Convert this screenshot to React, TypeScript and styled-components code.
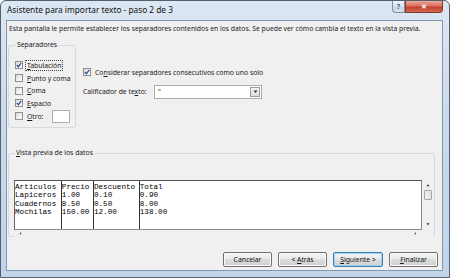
import styled, { createGlobalStyle } from "styled-components";

const GlobalStyle = createGlobalStyle`
  html, body {
    margin: 0;
    padding: 0;
    background: #ffffff;
  }
  body {
    font-family: "Noto Sans", "Open Sans", sans-serif;
    color: #1a1a1a;
  }
`;

const Window = styled.div`
  width: 450px;
  height: 278px;
  box-sizing: border-box;
  border: 1px solid #56606c;
  border-radius: 6px 6px 0 0;
  background: linear-gradient(180deg, #dce7f3 0%, #cbdaec 40%, #c1d4ea 100%);
  padding: 0 6px 6px 5px;
  display: flex;
  flex-direction: column;
`;

const TitleBar = styled.div`
  height: 19px;
  display: flex;
  justify-content: space-between;
  align-items: flex-start;
  flex-shrink: 0;
`;

const Title = styled.div`
  font-size: 8.3px;
  line-height: 10px;
  padding: 4px 0 0 1px;
  color: #111;
`;

const Controls = styled.div`
  display: flex;
`;

const CaptionButton = styled.div<{ kind: "help" | "close" }>`
  height: 12px;
  width: ${(p) => (p.kind === "close" ? "38px" : "13px")};
  box-sizing: border-box;
  border: 1px solid ${(p) => (p.kind === "close" ? "#7a3a30" : "#7f8ea3")};
  border-top: none;
  border-radius: ${(p) => (p.kind === "close" ? "0 0 4px 0" : "0 0 0 4px")};
  background: ${(p) =>
    p.kind === "close"
      ? "linear-gradient(180deg, #e9a99d 0%, #d8705e 45%, #c23f2b 55%, #d26a52 100%)"
      : "linear-gradient(180deg, #eef3f9 0%, #d7e2ef 50%, #c3d2e4 55%, #d6e2ef 100%)"};
  display: flex;
  align-items: center;
  justify-content: center;
  font-size: 7px;
  font-weight: bold;
  color: ${(p) => (p.kind === "close" ? "#fff" : "#4a5a70")};
`;

const Client = styled.div`
  flex: 1;
  background: #f0f0f0;
  border: 1px solid #8497b0;
  padding: 3px 4px 3px 1px;
  display: flex;
  flex-direction: column;
  font-size: 6.8px;
  line-height: 10px;
`;

const Description = styled.div`
  margin-left: 1px;
  white-space: nowrap;
`;

const TopRow = styled.div`
  display: flex;
  margin-top: 6px;
`;

const Group = styled.fieldset<{ w: number; h: number }>`
  margin: 0;
  padding: 0 5px 0 6px;
  width: ${(p) => p.w}px;
  height: ${(p) => p.h}px;
  box-sizing: border-box;
  border: 1px solid #d5dbe2;
  border-radius: 2px;
  min-width: 0;
`;

const Legend = styled.legend`
  padding: 0 1px;
  margin-left: 1px;
  font-size: 6.8px;
  line-height: 10px;
`;

const CheckList = styled.div`
  display: flex;
  flex-direction: column;
  margin-top: 9px;
`;

const CheckRow = styled.div`
  height: 12.7px;
  display: flex;
  align-items: center;
  gap: 3px;
  white-space: nowrap;
`;

const Box = styled.span`
  width: 8px;
  height: 8px;
  box-sizing: border-box;
  border: 1px solid #8e8f8f;
  background: linear-gradient(135deg, #dadada 0%, #f6f6f6 70%, #ffffff 100%);
  display: inline-flex;
  align-items: center;
  justify-content: center;
  flex-shrink: 0;
`;

const Label = styled.span<{ focused?: boolean }>`
  display: inline-block;
  line-height: 9px;
  outline: ${(p) => (p.focused ? "1px dotted #444" : "none")};
  padding: 0 1px;
`;

const OtherInput = styled.div`
  width: 19px;
  height: 13px;
  box-sizing: border-box;
  margin-left: 5px;
  background: #fff;
  border: 1px solid #abadb3;
`;

const RightCol = styled.div`
  display: flex;
  flex-direction: column;
  margin-left: 7px;
  padding-top: 26px;
`;

const FieldRow = styled.div`
  display: flex;
  align-items: center;
  height: 14px;
  margin-top: 6px;
`;

const FieldLabel = styled.span`
  width: 71px;
`;

const Select = styled.div`
  width: 108px;
  height: 14px;
  box-sizing: border-box;
  border: 1px solid #a5acb5;
  background: #fff;
  display: flex;
  align-items: center;
  justify-content: space-between;
  padding: 0 1px 0 3px;
`;

const DropButton = styled.div`
  width: 10px;
  height: 10px;
  box-sizing: border-box;
  border: 1px solid #9a9a9a;
  background: linear-gradient(180deg, #f6f6f6, #dcdcdc);
  display: flex;
  align-items: center;
  justify-content: center;
`;

const PreviewGroup = styled(Group)`
  margin-top: 20px;
  padding: 0 1px 0 5px;
`;

const PreviewFrame = styled.div`
  margin-top: 22px;
  display: grid;
  grid-template-columns: 1fr 11px;
  grid-template-rows: 50px 7px;
`;

const DataBox = styled.div`
  background: #fff;
  border: 1px solid #8a8a8a;
  border-top-color: #555;
  border-left-color: #666;
  display: flex;
  font-family: "Liberation Mono", "Courier New", monospace;
  font-size: 7.65px;
  line-height: 8.3px;
  color: #000;
  overflow: hidden;
`;

const DataColumn = styled.div<{ chars?: number; first?: boolean }>`
  ${(p) => (p.chars ? `width: ${p.chars}ch;` : "flex: 1;")}
  flex-shrink: 0;
  box-sizing: border-box;
  border-left: ${(p) => (p.first ? "none" : "1px solid #333")};
  padding-top: 2px;
  white-space: pre;
`;

const VScroll = styled.div`
  background: #f0f0f0;
  display: flex;
  flex-direction: column;
  align-items: center;
  padding: 3px 0 4px 1px;
`;

const Thumb = styled.div`
  margin-top: 3px;
  width: 8px;
  height: 10px;
  box-sizing: border-box;
  border: 1px solid #a6a6a6;
  border-radius: 1px;
  background: linear-gradient(90deg, #f4f4f4, #dedede);
`;

const Spacer = styled.div`
  flex: 1;
`;

const HScroll = styled.div`
  background: #f0f0f0;
  display: flex;
  justify-content: space-between;
  align-items: center;
  padding: 0 5px 0 5px;
`;

const Corner = styled.div`
  background: #f0f0f0;
`;

const ButtonRow = styled.div`
  margin-top: auto;
  display: flex;
  justify-content: flex-end;
  gap: 6px;
`;

const Button = styled.div<{ primary?: boolean; w: number }>`
  width: ${(p) => p.w}px;
  height: 15px;
  box-sizing: border-box;
  border: 1px solid ${(p) => (p.primary ? "#3c7fb1" : "#707070")};
  border-radius: 2px;
  box-shadow: ${(p) => (p.primary ? "inset 0 0 0 1px #9ad4f5" : "inset 0 0 0 1px #fbfbfb")};
  background: linear-gradient(180deg, #f2f2f2 0%, #ebebeb 45%, #dddddd 50%, #cfcfcf 100%);
  display: flex;
  align-items: center;
  justify-content: center;
  font-size: 6.8px;
  color: #111;
  white-space: pre;
`;

const Arrow = ({ dir, size = 5 }: { dir: "up" | "down" | "left" | "right"; size?: number }) => {
  const pts = {
    up: "0.5,4 2.5,1.5 4.5,4",
    down: "0.5,1.5 2.5,4 4.5,1.5",
    left: "3.5,0.5 1,2.5 3.5,4.5",
    right: "1.5,0.5 4,2.5 1.5,4.5",
  }[dir];
  return (
    <svg width={size} height={size} viewBox="0 0 5 5">
      <polygon points={pts} fill="#333" />
    </svg>
  );
};

const Check = () => (
  <svg width="6" height="6" viewBox="0 0 6 6">
    <path d="M0.8 3 L2.4 4.7 L5.3 0.9" fill="none" stroke="#2b4f8f" strokeWidth="1.2" />
  </svg>
);

const CheckBox = ({ checked }: { checked?: boolean }) => <Box>{checked && <Check />}</Box>;

const separators = [
  { key: "t", label: ["T", "abulación"], checked: true, focused: true },
  { key: "p", label: ["P", "unto y coma"] },
  { key: "c", label: ["C", "oma"] },
  { key: "e", label: ["E", "spacio"], checked: true },
];

const columns = [
  { chars: 10, rows: ["Articulos", "Lapiceros", "Cuadernos", "Mochilas"] },
  { chars: 7, rows: ["Precio", "1.00", "8.50", "150.00"] },
  { chars: 10, rows: ["Descuento", "0.10", "0.50", "12.00"] },
  { chars: 0, rows: ["Total", "0.90", "8.00", "138.00"] },
];

export default function App() {
  return (
    <>
      <GlobalStyle />
      <Window>
        <TitleBar>
          <Title>Asistente para importar texto - paso 2 de 3</Title>
          <Controls>
            <CaptionButton kind="help">?</CaptionButton>
            <CaptionButton kind="close">✕</CaptionButton>
          </Controls>
        </TitleBar>
        <Client>
          <Description>
            Esta pantalla le permite establecer los separadores contenidos en los datos. Se puede ver cómo cambia el
            texto en la vista previa.
          </Description>
          <TopRow>
            <Group w={68} h={88}>
              <Legend>Separadores</Legend>
              <CheckList>
                {separators.map((s) => (
                  <CheckRow key={s.key}>
                    <CheckBox checked={s.checked} />
                    <Label focused={s.focused}>
                      <u>{s.label[0]}</u>
                      {s.label[1]}
                    </Label>
                  </CheckRow>
                ))}
                <CheckRow>
                  <CheckBox />
                  <Label>
                    <u>O</u>tro:
                  </Label>
                  <OtherInput />
                </CheckRow>
              </CheckList>
            </Group>
            <RightCol>
              <CheckRow>
                <CheckBox checked />
                <Label>
                  Co<u>n</u>siderar separadores consecutivos como uno solo
                </Label>
              </CheckRow>
              <FieldRow>
                <FieldLabel>
                  Calificador de te<u>x</u>to:
                </FieldLabel>
                <Select>
                  <span>"</span>
                  <DropButton>
                    <Arrow dir="down" />
                  </DropButton>
                </Select>
              </FieldRow>
            </RightCol>
          </TopRow>
          <PreviewGroup w={427} h={89}>
            <Legend>
              <u>V</u>ista previa de los datos
            </Legend>
            <PreviewFrame>
              <DataBox>
                {columns.map((c, i) => (
                  <DataColumn key={i} chars={c.chars || undefined} first={i === 0}>
                    {c.rows.join("\n")}
                  </DataColumn>
                ))}
              </DataBox>
              <VScroll>
                <Arrow dir="up" size={4} />
                <Thumb />
                <Spacer />
                <Arrow dir="down" size={4} />
              </VScroll>
              <HScroll>
                <Arrow dir="left" size={3} />
                <Arrow dir="right" size={3} />
              </HScroll>
              <Corner />
            </PreviewFrame>
          </PreviewGroup>
          <ButtonRow>
            <Button w={49}>Cancelar</Button>
            <Button w={49}>
              <span>
                {"< "}
                <u>A</u>trás
              </span>
            </Button>
            <Button w={50} primary>
              <span>
                <u>S</u>iguiente {">"}
              </span>
            </Button>
            <Button w={49}>
              <span>
                <u>F</u>inalizar
              </span>
            </Button>
          </ButtonRow>
        </Client>
      </Window>
    </>
  );
}
